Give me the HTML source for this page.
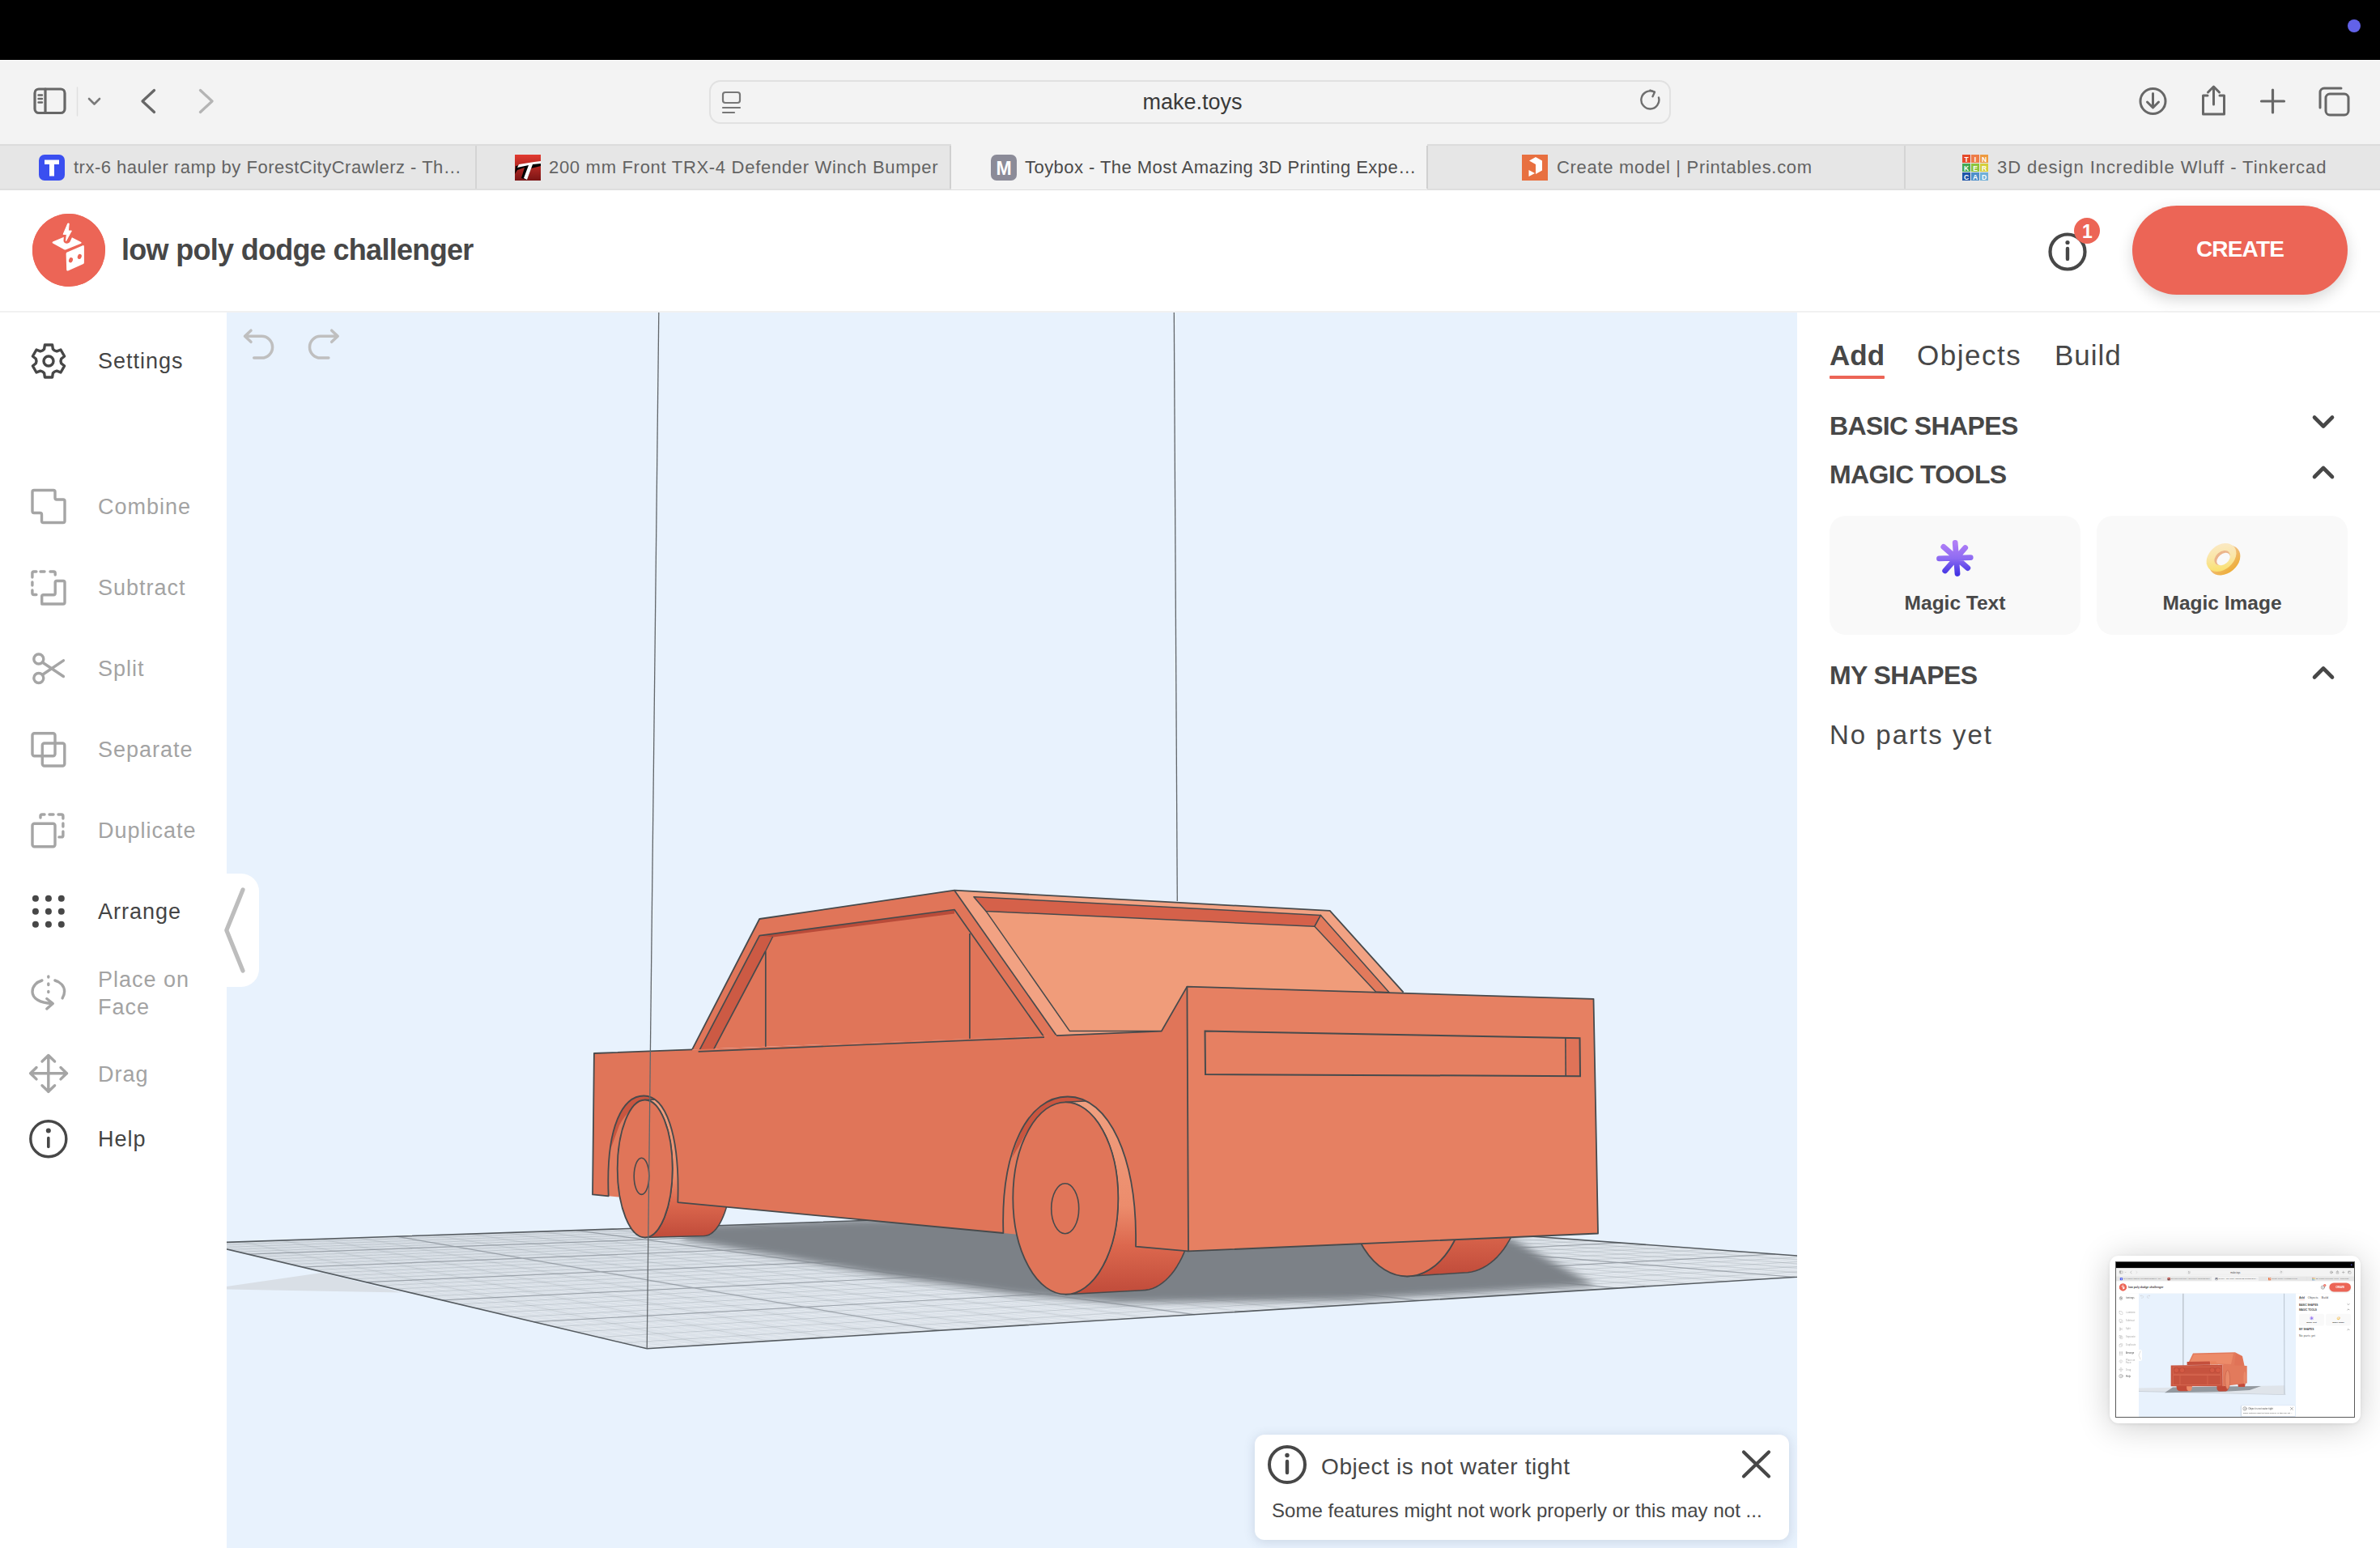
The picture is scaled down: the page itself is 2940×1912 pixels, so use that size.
<!DOCTYPE html>
<html><head><meta charset="utf-8">
<style>
*{box-sizing:border-box;margin:0;padding:0}
html,body{width:2940px;height:1912px;overflow:hidden;background:#fff;font-family:"Liberation Sans",sans-serif;position:relative}
.a{position:absolute}
#blk{left:0;top:0;width:2940px;height:74px;background:#000}
#dot{left:2900px;top:24px;width:16px;height:16px;border-radius:50%;background:#6262e8}
#tb{left:0;top:74px;width:2940px;height:104px;background:#f3f3f3;border-top:1px solid #fdfdfd}
#url{left:876px;top:99px;width:1188px;height:54px;border:2px solid #e1e1e1;border-radius:14px;background:#f3f3f3}
#urltxt{left:876px;top:99px;width:1194px;height:54px;line-height:54px;text-align:center;font-size:27px;color:#3a3a3a}
#tabs{left:0;top:178px;width:2940px;height:57px;background:#e6e6e6;border-top:2px solid #dcdcdc;border-bottom:2px solid #dedede}
.tab{top:178px;height:57px;line-height:57px;font-size:22px;letter-spacing:0.7px;color:#636363;white-space:nowrap}
.tsep{top:180px;width:2px;height:53px;background:#d4d4d4}
#acttab{left:1175px;top:178px;width:588px;height:56px;background:#f3f3f3}
.fav{top:191px;width:32px;height:32px;border-radius:7px}
#hdr{left:0;top:235px;width:2940px;height:151px;background:#fff;border-bottom:2px solid #f1f1f1}
#logo{left:40px;top:264px;width:90px;height:90px;border-radius:50%;background:#ec6556}
#title{left:150px;top:285px;font-size:36px;letter-spacing:-0.7px;font-weight:bold;color:#474747;white-space:nowrap;line-height:48px}
#create{left:2634px;top:254px;width:266px;height:110px;border-radius:55px;background:#ec6556;box-shadow:0 6px 18px rgba(0,0,0,0.16);color:#fff;font-weight:bold;font-size:28px;text-align:center;line-height:107px;letter-spacing:-0.8px}
#side{left:0;top:386px;width:280px;height:1526px;background:#fff}
.si{left:121px;font-size:27px;line-height:40px;letter-spacing:1px;white-space:nowrap;color:#a3a3a3}
.si.dk{color:#444}
#vp{left:280px;top:386px;width:1940px;height:1526px;background:#e8f2fd;overflow:hidden}
#rp{left:2220px;top:386px;width:720px;height:1526px;background:#fff}
.hd{left:2260px;font-size:32px;letter-spacing:-0.6px;font-weight:bold;color:#474747;white-space:nowrap}
.card{top:637px;width:310px;height:147px;border-radius:20px;background:#f9f9f9}
.cl{font-size:24.5px;font-weight:bold;color:#484848;text-align:center;width:310px}
#toast{left:1550px;top:1772px;width:660px;height:130px;border-radius:12px;background:#fff;box-shadow:0 2px 14px rgba(60,80,110,0.18)}
#thumb{left:2606px;top:1551px;width:310px;height:207px;border-radius:11px;background:#fff;box-shadow:0 4px 40px rgba(0,0,0,0.2),0 1px 4px rgba(0,0,0,0.08)}
</style></head><body>
<div class="a" id="blk"></div>
<div class="a" id="dot"></div>
<div class="a" id="tb"></div>
<div class="a" id="url"></div>

<svg class="a" style="left:0;top:0" width="2940" height="240" viewBox="0 0 2940 240">
 <g fill="none" stroke-linecap="round" stroke-linejoin="round">
  <rect x="43" y="110" width="37" height="29.5" rx="5" stroke="#676767" stroke-width="3.2"/>
  <line x1="56" y1="110" x2="56" y2="139.5" stroke="#676767" stroke-width="3.2"/>
  <path d="M47.5 117.5h4.5M47.5 122h4.5M47.5 126.5h4.5" stroke="#676767" stroke-width="2.4"/>
  <line x1="95.5" y1="108" x2="95.5" y2="143" stroke="#e0e0e0" stroke-width="1.5"/>
  <path d="M110 122l6.5 6.5 6.5-6.5" stroke="#7a7a7a" stroke-width="2.6"/>
  <path d="M190.5 111.5L176 125l14.5 13.5" stroke="#676767" stroke-width="3.3"/>
  <path d="M247.5 111.5L262 125l-14.5 13.5" stroke="#b4b4b4" stroke-width="3.3"/>
  <rect x="893" y="114" width="21" height="13" rx="3" stroke="#777" stroke-width="2.2"/>
  <path d="M893 133h21M893 139h14" stroke="#777" stroke-width="2.2"/>
  <path d="M2049 120.5a11 11 0 1 1-5.5-6.8" stroke="#6f6f6f" stroke-width="2.4"/>
  <path d="M2038.5 111.5l5.5 2.2-2.5 5.5" stroke="#6f6f6f" stroke-width="2.4"/>
  <circle cx="2659.5" cy="125" r="15.5" stroke="#676767" stroke-width="3"/>
  <path d="M2659.5 115.5v17M2652.5 126l7 7 7-7" stroke="#676767" stroke-width="3"/>
  <path d="M2727 118h-5.5v23h26v-23h-5.5" stroke="#676767" stroke-width="3"/>
  <path d="M2734.5 129v-22M2727.5 114l7-7 7 7" stroke="#676767" stroke-width="3"/>
  <path d="M2807.5 111v28M2793.5 125h28" stroke="#676767" stroke-width="3.2"/>
  <rect x="2873" y="116" width="28" height="26" rx="5" stroke="#676767" stroke-width="3"/>
  <path d="M2866 133v-19a5 5 0 0 1 5-5h21" stroke="#676767" stroke-width="3"/>
 </g>
</svg>
<div class="a" id="urltxt">make.toys</div>
<div class="a" id="tabs"></div>
<div class="a" id="acttab"></div>

<div class="a tsep" style="left:587px"></div>
<div class="a tsep" style="left:2352px"></div>
<div class="a tsep" style="left:1173px;background:#d0d0d0"></div>
<div class="a tsep" style="left:1762px;background:#d0d0d0"></div>
<div class="a tab" style="left:91px;letter-spacing:0.5px">trx-6 hauler ramp by ForestCityCrawlerz - Th…</div>
<div class="a tab" style="left:678px">200 mm Front TRX-4 Defender Winch Bumper</div>
<div class="a tab" style="left:1266px;color:#4a4a4a;letter-spacing:0.45px">Toybox - The Most Amazing 3D Printing Expe…</div>
<div class="a tab" style="left:1923px">Create model | Printables.com</div>
<div class="a tab" style="left:2467px;letter-spacing:0.95px">3D design Incredible Wluff - Tinkercad</div>
<svg class="a" style="left:0;top:178px" width="2940" height="57" viewBox="0 178 2940 57">
 <rect x="48" y="191" width="32" height="32" rx="7" fill="#3a4ff0"/>
 <path d="M55 197.5h18v5.5h-6v14.5h-6v-14.5h-6z" fill="#fff"/>
 <defs><linearGradient id="rg" x1="0" y1="0" x2="0" y2="1"><stop offset="0" stop-color="#e23a30"/><stop offset="1" stop-color="#7a1414"/></linearGradient></defs>
 <rect x="636" y="191" width="32" height="32" fill="url(#rg)"/>
 <path d="M636 215l3-5 9-3-4 13 7 2 5-14 12-3v-5l-11 2h-1l-19 3z" fill="#000"/>
 <path d="M641 203l19-3 8-1v3l-10 1-7 19-4-2 6-16-14 3z" fill="#fff"/>
 <rect x="1224" y="191" width="32" height="32" rx="7" fill="#8b8b98"/>
 <text x="1240" y="216" font-size="23" font-weight="bold" fill="#fff" text-anchor="middle" font-family="Liberation Sans">M</text>
 <rect x="1880" y="191" width="32" height="32" fill="#e87040"/>
 <path d="M1889 198.5l8-4.5 8 4.5v12l-8 4.5v-12l-8-4.5z M1888.5 210l7.5 4-7.5 4z" fill="#fff"/>
 <g font-family="Liberation Sans" font-weight="bold" font-size="8.5" fill="#fff" text-anchor="middle">
 <rect x="2424" y="191" width="10" height="10" fill="#e54a2a"/><rect x="2435" y="191" width="10" height="10" fill="#ee7c48"/><rect x="2446" y="191" width="10" height="10" fill="#ee9a40"/>
 <rect x="2424" y="202" width="10" height="10" fill="#44a852"/><rect x="2435" y="202" width="10" height="10" fill="#8cc43a"/><rect x="2446" y="202" width="10" height="10" fill="#d4cf3a"/>
 <rect x="2424" y="213" width="10" height="10" fill="#1f55a8"/><rect x="2435" y="213" width="10" height="10" fill="#4e8fca"/><rect x="2446" y="213" width="10" height="10" fill="#6fb0d8"/>
 <text x="2429" y="199.5">T</text><text x="2440" y="199.5">I</text><text x="2451" y="199.5">N</text>
 <text x="2429" y="210.5">K</text><text x="2440" y="210.5">E</text><text x="2451" y="210.5">R</text>
 <text x="2429" y="221.5">C</text><text x="2440" y="221.5">A</text><text x="2451" y="221.5">D</text>
 </g>
</svg>
<div class="a" id="hdr"></div>
<div class="a" id="logo"></div>

<svg class="a" style="left:0;top:235px" width="2940" height="150" viewBox="0 235 2940 150">
 <circle cx="85" cy="309" r="45" fill="#ec6556"/>
 <path d="M83.8 276L78.1 289.4h4.2l-0.7 8.2 6.8-12.5h-4l0.8-9z" fill="#fff" stroke="#fff" stroke-width="1" stroke-linejoin="round"/>
 <path d="M65.2 298.5L78.8 292.7l-0.3 4.6c0 3.5 6 5.5 8.4 0.5l2-4.5l11.2 5.8c0.8 0.5 0.8 1.3 0 1.7L81.6 308.2c-0.8 0.3-1.5 0.3-2.3 0L65.2 300.5c-0.8-0.5-0.8-1.5 0-2z" fill="#fff"/>
 <path d="M83.6 311.2L102.2 303.2c1-0.4 1.7 0.3 1.7 1.5v19.5c0 1-0.6 1.7-1.5 2.1L84 334.4c-1 0.4-1.7-0.2-1.8-1.2l-0.6-19.8c0-1 0.9-1.9 2-2.2z" fill="#fff"/>
 <ellipse cx="87.5" cy="321.2" rx="2.4" ry="3.2" transform="rotate(20 87.5 321.2)" fill="#ec6556"/>
 <ellipse cx="98.3" cy="316.9" rx="2.4" ry="3.2" transform="rotate(20 98.3 316.9)" fill="#ec6556"/>
 <g fill="none" stroke="#474747" stroke-linecap="round">
  <circle cx="2554" cy="311" r="21.5" stroke-width="4.2"/>
  <line x1="2554" y1="307" x2="2554" y2="320" stroke-width="4.4"/>
 </g>
 <circle cx="2554" cy="299.5" r="2.6" fill="#474747"/>
 <circle cx="2578" cy="285" r="16" fill="#ec6556"/>
 <text x="2578.5" y="294" font-size="23" font-weight="bold" fill="#fff" text-anchor="middle" font-family="Liberation Sans">1</text>
</svg>
<div class="a" id="title">low poly dodge challenger</div>
<div class="a" id="create">CREATE</div>
<div class="a" id="side"></div>
<div class="a" id="vp"></div>
<svg class="a" style="left:280px;top:386px" width="1940" height="1526" viewBox="280 386 1940 1526">
<defs>
<clipPath id="plc"><polygon points="248.5,1535.4 799.2,1665.8 2414.6,1565.2 1447.7,1494.6"/></clipPath>
<filter id="blr" x="-10%" y="-30%" width="120%" height="160%"><feGaussianBlur stdDeviation="5"/></filter>
<linearGradient id="trd" x1="0" y1="0" x2="0" y2="1"><stop offset="0" stop-color="#de6a4f"/><stop offset="1" stop-color="#bf4a39"/></linearGradient>
<linearGradient id="trl" x1="0" y1="0" x2="0" y2="1"><stop offset="0" stop-color="#f0a080"/><stop offset="0.55" stop-color="#ec8c6c"/><stop offset="0.75" stop-color="#dc684e"/><stop offset="1" stop-color="#c04b3a"/></linearGradient>
</defs>
<polygon points="280,1588.9 397.2,1571.9 496.8,1596.4 280,1592.6" fill="#d9dfe6"/>
<polygon points="248.5,1535.4 799.2,1665.8 2414.6,1565.2 1447.7,1494.6" fill="#e1e7ee"/>
<path d="M261.1 1535.0L818.5 1664.6M273.6 1534.5L837.7 1663.4M286.0 1534.1L856.8 1662.2M298.4 1533.7L875.7 1661.0M310.7 1533.3L894.4 1659.9M323.0 1532.9L913.1 1658.7M335.3 1532.4L931.6 1657.6M347.4 1532.0L950.0 1656.4M359.6 1531.6L968.2 1655.3M371.7 1531.2L986.3 1654.1M383.7 1530.8L1004.3 1653.0M395.7 1530.4L1022.1 1651.9M407.6 1530.0L1039.9 1650.8M419.5 1529.6L1057.5 1649.7M431.3 1529.2L1075.0 1648.6M443.1 1528.8L1092.3 1647.5M454.8 1528.4L1109.6 1646.5M466.5 1528.0L1126.7 1645.4M478.1 1527.6L1143.7 1644.3M489.7 1527.2L1160.6 1643.3M501.3 1526.8L1177.4 1642.2M512.7 1526.4L1194.0 1641.2M524.2 1526.0L1210.6 1640.2M535.6 1525.6L1227.0 1639.2M546.9 1525.2L1243.3 1638.1M558.2 1524.9L1259.6 1637.1M569.5 1524.5L1275.7 1636.1M580.7 1524.1L1291.7 1635.1M591.9 1523.7L1307.6 1634.1M603.0 1523.3L1323.4 1633.2M614.1 1523.0L1339.0 1632.2M625.1 1522.6L1354.6 1631.2M636.1 1522.2L1370.1 1630.2M647.0 1521.8L1385.5 1629.3M657.9 1521.5L1400.8 1628.3M668.8 1521.1L1415.9 1627.4M679.6 1520.7L1431.0 1626.5M690.4 1520.4L1446.0 1625.5M701.1 1520.0L1460.9 1624.6M711.8 1519.6L1475.7 1623.7M722.4 1519.3L1490.4 1622.8M733.0 1518.9L1505.0 1621.8M743.6 1518.6L1519.5 1620.9M754.1 1518.2L1533.9 1620.0M764.6 1517.8L1548.2 1619.2M775.0 1517.5L1562.5 1618.3M785.4 1517.1L1576.6 1617.4M795.7 1516.8L1590.7 1616.5M806.0 1516.4L1604.7 1615.6M816.3 1516.1L1618.6 1614.8M826.5 1515.7L1632.4 1613.9M836.7 1515.4L1646.1 1613.1M846.9 1515.0L1659.7 1612.2M857.0 1514.7L1673.2 1611.4M867.1 1514.4L1686.7 1610.5M877.1 1514.0L1700.1 1609.7M887.1 1513.7L1713.4 1608.9M897.0 1513.3L1726.6 1608.0M907.0 1513.0L1739.8 1607.2M916.8 1512.7L1752.8 1606.4M926.7 1512.3L1765.8 1605.6M936.5 1512.0L1778.7 1604.8M946.3 1511.7L1791.5 1604.0M956.0 1511.3L1804.3 1603.2M965.7 1511.0L1817.0 1602.4M975.3 1510.7L1829.6 1601.6M985.0 1510.3L1842.1 1600.9M994.6 1510.0L1854.5 1600.1M1004.1 1509.7L1866.9 1599.3M1013.6 1509.4L1879.2 1598.5M1023.1 1509.0L1891.5 1597.8M1032.5 1508.7L1903.6 1597.0M1041.9 1508.4L1915.7 1596.3M1051.3 1508.1L1927.8 1595.5M1060.7 1507.8L1939.7 1594.8M1070.0 1507.5L1951.6 1594.0M1079.2 1507.1L1963.4 1593.3M1088.5 1506.8L1975.2 1592.6M1097.7 1506.5L1986.9 1591.8M1106.8 1506.2L1998.5 1591.1M1116.0 1505.9L2010.0 1590.4M1125.1 1505.6L2021.5 1589.7M1134.1 1505.3L2032.9 1589.0M1143.2 1505.0L2044.3 1588.3M1152.2 1504.7L2055.6 1587.6M1161.1 1504.4L2066.8 1586.9M1170.1 1504.0L2078.0 1586.2M1179.0 1503.7L2089.1 1585.5M1187.8 1503.4L2100.1 1584.8M1196.7 1503.1L2111.1 1584.1M1205.5 1502.8L2122.0 1583.4M1214.2 1502.5L2132.9 1582.7M1223.0 1502.2L2143.7 1582.1M1231.7 1501.9L2154.5 1581.4M1240.4 1501.7L2165.1 1580.7M1249.0 1501.4L2175.8 1580.1M1257.6 1501.1L2186.3 1579.4M1266.2 1500.8L2196.9 1578.8M1274.8 1500.5L2207.3 1578.1M1283.3 1500.2L2217.7 1577.5M1291.8 1499.9L2228.1 1576.8M1300.3 1499.6L2238.4 1576.2M1308.7 1499.3L2248.6 1575.5M1317.1 1499.0L2258.8 1574.9M1325.5 1498.8L2268.9 1574.3M1333.8 1498.5L2279.0 1573.6M1342.2 1498.2L2289.0 1573.0M1350.4 1497.9L2299.0 1572.4M1358.7 1497.6L2308.9 1571.8M1366.9 1497.3L2318.7 1571.2M1375.1 1497.1L2328.5 1570.6M1383.3 1496.8L2338.3 1570.0M1391.5 1496.5L2348.0 1569.3M1399.6 1496.2L2357.7 1568.7M1407.7 1496.0L2367.3 1568.1M1415.7 1495.7L2376.8 1567.6M1423.8 1495.4L2386.4 1567.0M1431.8 1495.1L2395.8 1566.4M1439.7 1494.9L2405.2 1565.8" stroke="#f5f8fb" stroke-width="0.9" fill="none" opacity="0.65"/>
<path d="M251.2 1536.0L1453.1 1495.0M253.9 1536.7L1458.6 1495.4M256.7 1537.3L1464.1 1495.8M259.4 1538.0L1469.6 1496.2M262.2 1538.6L1475.2 1496.6M265.0 1539.3L1480.7 1497.0M267.8 1540.0L1486.4 1497.4M270.7 1540.7L1492.0 1497.8M273.5 1541.3L1497.7 1498.2M276.4 1542.0L1503.4 1498.7M279.3 1542.7L1509.1 1499.1M282.2 1543.4L1514.9 1499.5M285.2 1544.1L1520.7 1499.9M288.1 1544.8L1526.5 1500.4M291.1 1545.5L1532.4 1500.8M294.1 1546.2L1538.3 1501.2M297.2 1546.9L1544.3 1501.7M300.2 1547.6L1550.2 1502.1M303.3 1548.4L1556.2 1502.5M306.4 1549.1L1562.3 1503.0M309.5 1549.8L1568.4 1503.4M312.7 1550.6L1574.5 1503.9M315.8 1551.3L1580.6 1504.3M319.0 1552.1L1586.8 1504.8M322.2 1552.9L1593.0 1505.2M325.5 1553.6L1599.3 1505.7M328.7 1554.4L1605.6 1506.1M332.0 1555.2L1611.9 1506.6M335.3 1556.0L1618.3 1507.1M338.7 1556.7L1624.7 1507.5M342.0 1557.5L1631.1 1508.0M345.4 1558.3L1637.6 1508.5M348.8 1559.2L1644.2 1508.9M352.3 1560.0L1650.7 1509.4M355.7 1560.8L1657.3 1509.9M359.2 1561.6L1664.0 1510.4M362.8 1562.5L1670.6 1510.9M366.3 1563.3L1677.4 1511.4M369.9 1564.1L1684.1 1511.9M373.5 1565.0L1690.9 1512.4M377.1 1565.9L1697.8 1512.9M380.8 1566.7L1704.7 1513.4M384.5 1567.6L1711.6 1513.9M388.2 1568.5L1718.6 1514.4M392.0 1569.4L1725.6 1514.9M395.8 1570.3L1732.7 1515.4M399.6 1571.2L1739.8 1515.9M403.5 1572.1L1746.9 1516.4M407.3 1573.0L1754.1 1517.0M411.3 1573.9L1761.4 1517.5M415.2 1574.9L1768.6 1518.0M419.2 1575.8L1776.0 1518.6M423.2 1576.8L1783.4 1519.1M427.2 1577.7L1790.8 1519.7M431.3 1578.7L1798.3 1520.2M435.4 1579.7L1805.8 1520.7M439.6 1580.6L1813.4 1521.3M443.8 1581.6L1821.0 1521.9M448.0 1582.6L1828.7 1522.4M452.3 1583.6L1836.4 1523.0M456.6 1584.7L1844.2 1523.5M460.9 1585.7L1852.0 1524.1M465.3 1586.7L1859.9 1524.7M469.7 1587.8L1867.8 1525.3M474.1 1588.8L1875.8 1525.9M478.6 1589.9L1883.8 1526.4M483.2 1591.0L1891.9 1527.0M487.7 1592.0L1900.0 1527.6M492.3 1593.1L1908.2 1528.2M497.0 1594.2L1916.5 1528.8M501.7 1595.4L1924.8 1529.4M506.4 1596.5L1933.2 1530.0M511.2 1597.6L1941.6 1530.7M516.0 1598.8L1950.1 1531.3M520.9 1599.9L1958.6 1531.9M525.8 1601.1L1967.2 1532.5M530.8 1602.2L1975.8 1533.2M535.8 1603.4L1984.6 1533.8M540.9 1604.6L1993.3 1534.4M546.0 1605.8L2002.2 1535.1M551.1 1607.1L2011.1 1535.7M556.3 1608.3L2020.0 1536.4M561.6 1609.5L2029.1 1537.0M566.9 1610.8L2038.2 1537.7M572.2 1612.1L2047.3 1538.4M577.6 1613.3L2056.5 1539.1M583.1 1614.6L2065.8 1539.7M588.6 1615.9L2075.2 1540.4M594.2 1617.3L2084.6 1541.1M599.8 1618.6L2094.1 1541.8M605.5 1619.9L2103.6 1542.5M611.2 1621.3L2113.3 1543.2M617.0 1622.7L2123.0 1543.9M622.9 1624.1L2132.7 1544.6M628.8 1625.5L2142.6 1545.3M634.8 1626.9L2152.5 1546.1M640.8 1628.3L2162.5 1546.8M646.9 1629.7L2172.5 1547.5M653.1 1631.2L2182.7 1548.3M659.3 1632.7L2192.9 1549.0M665.6 1634.2L2203.2 1549.8M672.0 1635.7L2213.6 1550.5M678.4 1637.2L2224.0 1551.3M684.9 1638.7L2234.5 1552.1M691.5 1640.3L2245.1 1552.8M698.1 1641.9L2255.8 1553.6M704.8 1643.4L2266.6 1554.4M711.6 1645.1L2277.5 1555.2M718.5 1646.7L2288.4 1556.0M725.4 1648.3L2299.4 1556.8M732.4 1650.0L2310.5 1557.6M739.5 1651.7L2321.7 1558.4M746.7 1653.4L2333.0 1559.2M753.9 1655.1L2344.4 1560.1M761.2 1656.8L2355.9 1560.9M768.7 1658.6L2367.4 1561.8M776.2 1660.3L2379.1 1562.6M783.8 1662.1L2390.8 1563.5M791.4 1664.0L2402.7 1564.3" stroke="#c3ccd6" stroke-width="0.8" fill="none" opacity="0.45"/>
<path d="M259.4 1538.0L1469.6 1496.2M298.4 1533.7L875.7 1661.0M270.7 1540.7L1492.0 1497.8M347.4 1532.0L950.0 1656.4M282.2 1543.4L1514.9 1499.5M395.7 1530.4L1022.1 1651.9M294.1 1546.2L1538.3 1501.2M443.1 1528.8L1092.3 1647.5M306.4 1549.1L1562.3 1503.0M489.7 1527.2L1160.6 1643.3M319.0 1552.1L1586.8 1504.8M535.6 1525.6L1227.0 1639.2M332.0 1555.2L1611.9 1506.6M580.7 1524.1L1291.7 1635.1M345.4 1558.3L1637.6 1508.5M625.1 1522.6L1354.6 1631.2M359.2 1561.6L1664.0 1510.4M668.8 1521.1L1415.9 1627.4M373.5 1565.0L1690.9 1512.4M711.8 1519.6L1475.7 1623.7M388.2 1568.5L1718.6 1514.4M754.1 1518.2L1533.9 1620.0M403.5 1572.1L1746.9 1516.4M795.7 1516.8L1590.7 1616.5M419.2 1575.8L1776.0 1518.6M836.7 1515.4L1646.1 1613.1M435.4 1579.7L1805.8 1520.7M877.1 1514.0L1700.1 1609.7M452.3 1583.6L1836.4 1523.0M916.8 1512.7L1752.8 1606.4M469.7 1587.8L1867.8 1525.3M956.0 1511.3L1804.3 1603.2M487.7 1592.0L1900.0 1527.6M994.6 1510.0L1854.5 1600.1M506.4 1596.5L1933.2 1530.0M1032.5 1508.7L1903.6 1597.0M525.8 1601.1L1967.2 1532.5M1070.0 1507.5L1951.6 1594.0M546.0 1605.8L2002.2 1535.1M1106.8 1506.2L1998.5 1591.1M566.9 1610.8L2038.2 1537.7M1143.2 1505.0L2044.3 1588.3M588.6 1615.9L2075.2 1540.4M1179.0 1503.7L2089.1 1585.5M611.2 1621.3L2113.3 1543.2M1214.2 1502.5L2132.9 1582.7M634.8 1626.9L2152.5 1546.1M1249.0 1501.4L2175.8 1580.1M659.3 1632.7L2192.9 1549.0M1283.3 1500.2L2217.7 1577.5M684.9 1638.7L2234.5 1552.1M1317.1 1499.0L2258.8 1574.9M711.6 1645.1L2277.5 1555.2M1350.4 1497.9L2299.0 1572.4M739.5 1651.7L2321.7 1558.4M1383.3 1496.8L2338.3 1570.0M768.7 1658.6L2367.4 1561.8M1415.7 1495.7L2376.8 1567.6" stroke="#8e979f" stroke-width="1" fill="none" opacity="0.3"/>
<path d="M306.4 1549.1L1562.3 1503.0M489.7 1527.2L1160.6 1643.3M373.5 1565.0L1690.9 1512.4M711.8 1519.6L1475.7 1623.7M452.3 1583.6L1836.4 1523.0M916.8 1512.7L1752.8 1606.4M546.0 1605.8L2002.2 1535.1M1106.8 1506.2L1998.5 1591.1M659.3 1632.7L2192.9 1549.0M1283.3 1500.2L2217.7 1577.5" stroke="#6a727a" stroke-width="1.2" fill="none" opacity="0.45"/>
<g clip-path="url(#plc)"><polygon points="860.0,1513.0 1447.7,1494.6 1864.0,1529.0 1972.0,1588.0 1664.7,1606.0 1382.0,1609.0 1258.0,1599.0 1095.0,1576.0 840.8,1530.0" fill="#7b8187" filter="url(#blr)"/></g>
<polyline points="1447.7,1494.6 248.5,1535.4 799.2,1665.8 2414.6,1565.2" fill="none" stroke="#555b60" stroke-width="1.6"/>
<polyline points="1447.7,1494.6 2414.6,1565.2" fill="none" stroke="#555b60" stroke-width="1.6"/>
<line x1="1450.3" y1="386" x2="1454.3" y2="1113" stroke="#62676b" stroke-width="1.3"/>
<polygon points="855,1296.3 938.2,1135 1179,1099.7 1305,1279.1" fill="#e07559"/>
<polygon points="1179,1099.7 1642.8,1124.9 1770,1266 1434.8,1273.6 1305,1279.1" fill="#f2a283"/>
<polygon points="1218,1125.4 1623.9,1144.3 1699.5,1225 1740,1270 1434.8,1273.6 1321.4,1273.6" fill="#f09c7a"/>
<polygon points="1202.9,1107.7 1631.5,1130.4 1623.9,1144.3 1218,1125.4" fill="#d5614a" stroke="#474a4c" stroke-width="1.5" stroke-linejoin="round"/>
<polygon points="1631.5,1130.4 1716,1225.7 1699.5,1225 1623.9,1144.3" fill="#e27a5c" stroke="#474a4c" stroke-width="1.5" stroke-linejoin="round"/>
<polyline points="1218,1125.4 1321.4,1273.6 1434.8,1273.6" fill="none" stroke="#474a4c" stroke-width="1.5"/>
<polygon points="938.2,1155.6 954.6,1156.9 881.5,1296.3 863.9,1297.3" fill="#cc5a44"/>
<polygon points="938.2,1155.6 1179,1123.5 1179,1128.5 954.6,1157.5" fill="#b94b39"/>
<polyline points="863.9,1297.3 938.2,1155.6 1179,1123.5 1290,1281.2" fill="none" stroke="#474a4c" stroke-width="1.7" stroke-linejoin="round"/>
<polyline points="954.6,1157 945.8,1174.5" fill="none" stroke="#474a4c" stroke-width="1.4"/>
<path d="M945.8 1174.5V1294M1197.9 1153V1284M881.5 1296.3L945.8 1174.5" fill="none" stroke="#474a4c" stroke-width="1.7"/>
<polyline points="855,1296.3 938.2,1135 1179,1099.7 1642.8,1124.9 1733.6,1225.7" fill="none" stroke="#474a4c" stroke-width="1.8" stroke-linejoin="round"/>
<polyline points="1179,1099.7 1305,1279.1" fill="none" stroke="#474a4c" stroke-width="1.7"/>
<path d="M751.7 1477.3C748 1390 770 1353.5 795.3 1353.5C822 1353.5 840 1400 837.3 1485.1Z" fill="#e27b5e"/>
<path d="M754 1420C760 1375 775 1353.5 795.3 1353.5C805 1353.5 812 1356 818 1362C800 1356 780 1362 765 1390Z" fill="#c9553f"/>
<path d="M1239.4 1523C1236 1420 1270 1354.5 1318.8 1354.5C1370 1354.5 1405 1430 1403 1539.6Z" fill="#e27b5e"/>
<path d="M1250 1430C1262 1385 1285 1354.5 1318.8 1354.5C1332 1354.5 1342 1357 1352 1362C1320 1356 1280 1370 1262 1410Z" fill="#c9553f"/>
<polygon points="1738.0,1342.5 1742.9,1342.8 1747.8,1343.5 1752.6,1344.7 1757.4,1346.5 1762.1,1348.7 1766.7,1351.4 1771.2,1354.6 1775.5,1358.2 1779.7,1362.2 1783.7,1366.7 1787.5,1371.5 1791.0,1376.8 1794.4,1382.4 1797.5,1388.3 1800.4,1394.5 1803.0,1401.0 1805.3,1407.8 1807.3,1414.7 1809.0,1421.9 1810.4,1429.2 1811.6,1436.7 1812.4,1444.2 1812.8,1451.8 1813.0,1459.5 1812.8,1467.2 1812.4,1474.8 1811.6,1482.3 1810.4,1489.8 1809.0,1497.1 1807.3,1504.3 1805.3,1511.2 1803.0,1518.0 1800.4,1524.5 1797.5,1530.7 1794.4,1536.6 1791.0,1542.2 1787.5,1547.5 1783.7,1552.3 1779.7,1556.8 1775.5,1560.8 1771.2,1564.4 1766.7,1567.6 1762.1,1570.3 1757.4,1572.5 1752.6,1574.3 1747.8,1575.5 1742.9,1576.2 1738.0,1576.5 1808.0,1572.0 1812.9,1571.7 1817.8,1571.0 1822.6,1569.8 1827.4,1568.0 1832.1,1565.8 1836.7,1563.1 1841.2,1559.9 1845.5,1556.3 1849.7,1552.3 1853.7,1547.8 1857.5,1543.0 1861.0,1537.7 1864.4,1532.1 1867.5,1526.2 1870.4,1520.0 1873.0,1513.5 1875.3,1506.7 1877.3,1499.8 1879.0,1492.6 1880.4,1485.3 1881.6,1477.8 1882.4,1470.3 1882.8,1462.7 1883.0,1455.0 1882.8,1447.3 1882.4,1439.7 1881.6,1432.2 1880.4,1424.7 1879.0,1417.4 1877.3,1410.2 1875.3,1403.3 1873.0,1396.5 1870.4,1390.0 1867.5,1383.8 1864.4,1377.9 1861.0,1372.3 1857.5,1367.0 1853.7,1362.2 1849.7,1357.7 1845.5,1353.7 1841.2,1350.1 1836.7,1346.9 1832.1,1344.2 1827.4,1342.0 1822.6,1340.2 1817.8,1339.0 1812.9,1338.3 1808.0,1338.0" fill="url(#trl)" stroke="#474a4c" stroke-width="1.6" stroke-linejoin="round"/>
<ellipse cx="1738.0" cy="1459.5" rx="75.0" ry="117.0" fill="#e07559" stroke="#474a4c" stroke-width="1.8"/>
<polygon points="796.7,1358.5 798.9,1358.7 801.1,1359.2 803.3,1360.1 805.5,1361.4 807.6,1363.0 809.7,1365.0 811.7,1367.3 813.7,1369.9 815.6,1372.8 817.4,1376.1 819.1,1379.6 820.7,1383.4 822.3,1387.5 823.7,1391.8 825.0,1396.3 826.1,1401.0 827.2,1405.9 828.1,1411.0 828.9,1416.2 829.5,1421.5 830.0,1426.9 830.4,1432.4 830.6,1437.9 830.7,1443.5 830.6,1449.1 830.4,1454.6 830.0,1460.1 829.5,1465.5 828.9,1470.8 828.1,1476.0 827.2,1481.1 826.1,1486.0 825.0,1490.7 823.7,1495.2 822.3,1499.5 820.7,1503.6 819.1,1507.4 817.4,1510.9 815.6,1514.2 813.7,1517.1 811.7,1519.7 809.7,1522.0 807.6,1524.0 805.5,1525.6 803.3,1526.9 801.1,1527.8 798.9,1528.3 796.7,1528.5 869.7,1526.5 871.9,1526.3 874.1,1525.8 876.3,1524.9 878.5,1523.6 880.6,1522.0 882.7,1520.0 884.7,1517.7 886.7,1515.1 888.6,1512.2 890.4,1508.9 892.1,1505.4 893.7,1501.6 895.3,1497.5 896.7,1493.2 898.0,1488.7 899.1,1484.0 900.2,1479.1 901.1,1474.0 901.9,1468.8 902.5,1463.5 903.0,1458.1 903.4,1452.6 903.6,1447.1 903.7,1441.5 903.6,1435.9 903.4,1430.4 903.0,1424.9 902.5,1419.5 901.9,1414.2 901.1,1409.0 900.2,1403.9 899.1,1399.0 898.0,1394.3 896.7,1389.8 895.3,1385.5 893.7,1381.4 892.1,1377.6 890.4,1374.1 888.6,1370.8 886.7,1367.9 884.7,1365.3 882.7,1363.0 880.6,1361.0 878.5,1359.4 876.3,1358.1 874.1,1357.2 871.9,1356.7 869.7,1356.5" fill="url(#trl)" stroke="#474a4c" stroke-width="1.6" stroke-linejoin="round"/>
<ellipse cx="796.7" cy="1443.5" rx="34.0" ry="85.0" fill="#e07559" stroke="#474a4c" stroke-width="1.8"/>
<ellipse cx="792.5" cy="1452.8" rx="9.3" ry="22.6" fill="none" stroke="#474a4c" stroke-width="1.6"/>
<polygon points="1316.3,1361.3 1320.6,1361.6 1324.8,1362.3 1329.0,1363.6 1333.1,1365.3 1337.2,1367.6 1341.2,1370.3 1345.0,1373.5 1348.8,1377.2 1352.4,1381.3 1355.9,1385.8 1359.2,1390.8 1362.3,1396.1 1365.2,1401.7 1367.9,1407.7 1370.3,1414.1 1372.6,1420.7 1374.6,1427.5 1376.4,1434.6 1377.9,1441.8 1379.1,1449.3 1380.1,1456.8 1380.7,1464.5 1381.2,1472.2 1381.3,1480.0 1381.2,1487.8 1380.7,1495.5 1380.1,1503.2 1379.1,1510.7 1377.9,1518.2 1376.4,1525.4 1374.6,1532.5 1372.6,1539.3 1370.3,1545.9 1367.9,1552.3 1365.2,1558.3 1362.3,1563.9 1359.2,1569.2 1355.9,1574.2 1352.4,1578.7 1348.8,1582.8 1345.0,1586.5 1341.2,1589.7 1337.2,1592.4 1333.1,1594.7 1329.0,1596.4 1324.8,1597.7 1320.6,1598.4 1316.3,1598.7 1411.0,1593.7 1415.3,1593.4 1419.5,1592.7 1423.7,1591.4 1427.8,1589.7 1431.9,1587.4 1435.9,1584.7 1439.7,1581.5 1443.5,1577.8 1447.1,1573.7 1450.6,1569.2 1453.9,1564.2 1457.0,1558.9 1459.9,1553.3 1462.6,1547.3 1465.0,1540.9 1467.3,1534.3 1469.3,1527.5 1471.1,1520.4 1472.6,1513.2 1473.8,1505.7 1474.8,1498.2 1475.4,1490.5 1475.9,1482.8 1476.0,1475.0 1475.9,1467.2 1475.4,1459.5 1474.8,1451.8 1473.8,1444.3 1472.6,1436.8 1471.1,1429.6 1469.3,1422.5 1467.3,1415.7 1465.0,1409.1 1462.6,1402.7 1459.9,1396.7 1457.0,1391.1 1453.9,1385.8 1450.6,1380.8 1447.1,1376.3 1443.5,1372.2 1439.7,1368.5 1435.9,1365.3 1431.9,1362.6 1427.8,1360.3 1423.7,1358.6 1419.5,1357.3 1415.3,1356.6 1411.0,1356.3" fill="url(#trl)" stroke="#474a4c" stroke-width="1.6" stroke-linejoin="round"/>
<ellipse cx="1316.3" cy="1480.0" rx="65.0" ry="118.7" fill="#e07559" stroke="#474a4c" stroke-width="1.8"/>
<ellipse cx="1315.7" cy="1492.7" rx="17.0" ry="31.0" fill="none" stroke="#474a4c" stroke-width="1.6"/>
<path d="M733.9 1301L1434.8 1273.6L1466.4 1218.6L1468 1545.4L1403 1539.6C1405 1430 1370 1354.5 1318.8 1354.5C1270 1354.5 1236 1420 1239.4 1523L837.3 1485.1C840 1400 822 1353.5 795.3 1353.5C770 1353.5 748 1390 751.7 1477.3L732 1475.4Z" fill="#e07559"/>
<path d="M855 1296.3L733.9 1301L732 1475.4L751.7 1477.3C748 1390 770 1353.5 795.3 1353.5C822 1353.5 840 1400 837.3 1485.1L1239.4 1523C1236 1420 1270 1354.5 1318.8 1354.5C1370 1354.5 1405 1430 1403 1539.6L1468 1545.4M1305 1279.1L1434.8 1273.6L1466.4 1218.6" fill="none" stroke="#474a4c" stroke-width="1.8" stroke-linejoin="round"/>
<polygon points="1466.4,1218.6 1968.5,1233.8 1974,1523.5 1468,1545.4" fill="#e68062" stroke="#474a4c" stroke-width="1.8" stroke-linejoin="round"/>
<polygon points="1933.8,1281.9 1951.5,1282.2 1952,1329.2 1934,1329" fill="#e07358"/>
<polygon points="1488.5,1273.6 1951.5,1282.2 1952,1329.2 1489,1327" fill="none" stroke="#474a4c" stroke-width="2"/>
<line x1="1933.8" y1="1282" x2="1934.2" y2="1329" stroke="#474a4c" stroke-width="1.6"/>
<polyline points="862.6,1298.8 1290,1281.2" fill="none" stroke="#474a4c" stroke-width="1.7"/>
<line x1="813.8" y1="386" x2="799.2" y2="1666" stroke="#62676b" stroke-width="1.3"/>
</svg>
<div class="a" id="rp"></div>
<svg class="a" style="left:0;top:386px" width="440" height="1100" viewBox="0 386 440 1100">
 <g fill="none" stroke-linecap="round" stroke-linejoin="round">
  <path d="M54.6 431.2 L55.4 426.0 L64.6 426.0 L65.4 431.2 L67.5 433.0 L70.2 433.9 L75.0 432.0 L79.6 440.0 L75.6 443.3 L75.0 446.0 L75.6 448.7 L79.6 452.0 L75.0 460.0 L70.2 458.1 L67.5 459.0 L65.4 460.8 L64.6 466.0 L55.4 466.0 L54.6 460.8 L52.5 459.0 L49.8 458.1 L45.0 460.0 L40.4 452.0 L44.4 448.7 L45.0 446.0 L44.4 443.3 L40.4 440.0 L45.0 432.0 L49.8 433.9 L52.5 433.0Z" stroke="#474747" stroke-width="3.4"/>
  <circle cx="60" cy="446" r="6" stroke="#474747" stroke-width="3.4"/>
  <g stroke="#a5a5a5" stroke-width="3.4">
   <path d="M42 605.5h24a2 2 0 0 1 2 2v7.5a2 2 0 0 0 2 2h8a2 2 0 0 1 2 2v24.5a2 2 0 0 1-2 2h-24.5a2 2 0 0 1-2-2v-8a2 2 0 0 0-2-2h-7.5a2 2 0 0 1-2-2v-24a2 2 0 0 1 2-2z"/>
   <path d="M51.7 746h26.3a2 2 0 0 0 2-2v-24.5a2 2 0 0 0-2-2h-7.8a2 2 0 0 0-2 2v13.3a2 2 0 0 1-2 2h-12.5a2 2 0 0 0-2 2v7.2a2 2 0 0 0 2 2z"/>
   <path d="M39.9 713v-5a2 2 0 0 1 2-2h3M50 706h5M62 706h4.2a2 2 0 0 1 2 2v2M39.9 719v4M39.9 729v3.5a2 2 0 0 0 2 2h3"/>
   <circle cx="47.8" cy="814" r="6"/>
   <circle cx="47.8" cy="837.5" r="6"/>
   <path d="M53 818.5L78.4 835.5M53 833L78.4 815.8"/>
   <rect x="40" y="905.7" width="28" height="28" rx="2.5"/>
   <rect x="52.3" y="918" width="27.5" height="28" rx="2.5"/>
   <rect x="40" y="1017.3" width="28" height="28.5" rx="2.5"/>
   <path d="M50 1010v-2a2 2 0 0 1 2-2h3M61 1006h5M72 1006h3.9a2 2 0 0 1 2 2v3M77.9 1017v4M77.9 1027v4.9a2 2 0 0 1-2 2h-3"/>
   <path d="M59.8 1206v1M59.8 1215v1.5M59.8 1224.5v1"/>
   <path d="M51.9 1211C45 1213 40 1218 40 1225c0 8 9 14 24.5 14.5M67.9 1211c7 2 11.7 7 11.7 13.5 0 3-1 6-2.5 8.4M57.8 1233.5l7.5 6-7.5 6.5"/>
   <path d="M59.8 1303.5v45M37.6 1325.7h45M52 1311l7.8-7.5 7.8 7.5M52 1340.8l7.8 7.5 7.8-7.5M45 1318.5l-7.4 7.2 7.4 7.2M75 1318.5l7.4 7.2-7.4 7.2"/>
  </g>
  <circle cx="59.8" cy="1406.7" r="22" stroke="#474747" stroke-width="3.4"/>
  <path d="M59.8 1405.5v11" stroke="#474747" stroke-width="3.6"/>
  <g stroke="#bfbfbf" stroke-width="3.5">
   <path d="M310 408.2l-7.5 7.1 7.5 7M302.5 415.3h20.7a13.4 13.4 0 0 1 0 26.8h-9.5"/>
   <path d="M409.7 408.2l7.5 7.1-7.5 7M417.2 415.3h-21.3a13.4 13.4 0 0 0 0 26.8h10"/>
  </g>
 </g>
 <circle cx="59.8" cy="1396.6" r="3" fill="#474747"/>
 <g fill="#474747">
  <circle cx="43.9" cy="1109.8" r="4"/><circle cx="59.9" cy="1109.8" r="4"/><circle cx="75.8" cy="1109.8" r="4"/>
  <circle cx="43.9" cy="1125.8" r="4"/><circle cx="59.9" cy="1125.8" r="4"/><circle cx="75.8" cy="1125.8" r="4"/>
  <circle cx="43.9" cy="1141.7" r="4"/><circle cx="59.9" cy="1141.7" r="4"/><circle cx="75.8" cy="1141.7" r="4"/>
 </g>
</svg>
<div class="a si dk" style="top:426px">Settings</div>
<div class="a si" style="top:606px">Combine</div>
<div class="a si" style="top:706px">Subtract</div>
<div class="a si" style="top:806px">Split</div>
<div class="a si" style="top:906px">Separate</div>
<div class="a si" style="top:1006px">Duplicate</div>
<div class="a si dk" style="top:1106px">Arrange</div>
<div class="a si" style="top:1194px;line-height:33.5px">Place on<br>Face</div>
<div class="a si" style="top:1307px">Drag</div>
<div class="a si dk" style="top:1387px">Help</div>


<div class="a" style="left:2260px;top:414px;font-size:35px;font-weight:bold;color:#474747;line-height:50px">Add</div>
<div class="a" style="left:2260px;top:464px;width:68px;height:4px;background:#ec6556;border-radius:1px"></div>
<div class="a" style="left:2368px;top:414px;font-size:35px;letter-spacing:1.5px;color:#474747;line-height:50px">Objects</div>
<div class="a" style="left:2538px;top:414px;font-size:35px;letter-spacing:1px;color:#474747;line-height:50px">Build</div>
<div class="a hd" style="top:506px;line-height:40px">BASIC SHAPES</div>
<div class="a hd" style="top:566px;line-height:40px">MAGIC TOOLS</div>
<div class="a hd" style="top:814px;line-height:40px">MY SHAPES</div>
<svg class="a" style="left:2840px;top:500px" width="60" height="360" viewBox="2840 500 60 360">
 <g fill="none" stroke="#474747" stroke-width="4.6" stroke-linecap="round" stroke-linejoin="round">
  <path d="M2859 515.5l11 11 11-11"/>
  <path d="M2859 589l11-11 11 11"/>
  <path d="M2859 836.5l11-11 11 11"/>
 </g>
</svg>
<div class="a card" style="left:2260px"></div>
<div class="a card" style="left:2590px"></div>
<svg class="a" style="left:2380px;top:655px" width="70" height="70" viewBox="2380 655 70 70">
 <defs><linearGradient id="pg" x1="0" y1="0" x2="0" y2="1"><stop offset="0" stop-color="#b07ef6"/><stop offset="0.5" stop-color="#8f6cf2"/><stop offset="1" stop-color="#4636e4"/></linearGradient></defs>
 <g stroke="url(#pg)" stroke-width="6.8" stroke-linecap="round">
  <path d="M2415.2 670.5L2418 708.5M2395.5 689.8L2434.2 688.7M2400.8 675.4L2430.8 701.6M2427.7 676.6L2402.7 705"/>
 </g>
</svg>
<svg class="a" style="left:2715px;top:660px" width="60" height="60" viewBox="2715 660 60 60">
 <defs>
  <linearGradient id="og1" x1="0" y1="0" x2="0" y2="1"><stop offset="0" stop-color="#f2c7a8"/><stop offset="1" stop-color="#eeae38"/></linearGradient>
  <linearGradient id="og2" x1="1" y1="0" x2="0" y2="1"><stop offset="0" stop-color="#fbead0"/><stop offset="0.5" stop-color="#fae6a6"/><stop offset="1" stop-color="#f9de55"/></linearGradient>
 </defs>
 <ellipse cx="2748" cy="692" rx="21.5" ry="16" transform="rotate(-40 2748 692)" fill="url(#og1)"/>
 <ellipse cx="2744" cy="688.5" rx="20.5" ry="15" transform="rotate(-40 2744 688.5)" fill="url(#og2)"/>
 <ellipse cx="2745" cy="689" rx="11" ry="7.5" transform="rotate(-40 2745 689)" fill="#ebb58c"/>
 <ellipse cx="2746.5" cy="690.5" rx="9.5" ry="6.2" transform="rotate(-40 2746.5 690.5)" fill="#f9f9f9"/>
</svg>
<div class="a cl" style="left:2260px;top:728px;line-height:34px">Magic Text</div>
<div class="a cl" style="left:2590px;top:728px;line-height:34px">Magic Image</div>
<div class="a" style="left:2260px;top:886px;font-size:33px;letter-spacing:2px;color:#474747;line-height:44px;white-space:nowrap">No parts yet</div>
<div class="a" id="toast"></div>

<svg class="a" style="left:1550px;top:1772px" width="660" height="130" viewBox="1550 1772 660 130">
 <g fill="none" stroke="#474747" stroke-linecap="round">
  <circle cx="1590" cy="1809" r="22" stroke-width="4"/>
  <path d="M1590 1805v14" stroke-width="4.4"/>
  <path d="M2154 1793.5l31 30M2185 1793.5l-31 30" stroke-width="4.2"/>
 </g>
 <circle cx="1590" cy="1797.5" r="2.7" fill="#474747"/>
</svg>
<div class="a" style="left:1632px;top:1792px;font-size:28px;line-height:40px;color:#474747;white-space:nowrap;letter-spacing:0.6px">Object is not water tight</div>
<div class="a" style="left:1571px;top:1850px;font-size:24px;line-height:32px;color:#474747;white-space:nowrap;letter-spacing:0.05px">Some features might not work properly or this may not ...</div>
<div class="a" style="left:280px;top:1079px;width:40px;height:140px;background:#fff;border-radius:0 22px 22px 0"></div>
<svg class="a" style="left:270px;top:1090px" width="40" height="120" viewBox="270 1090 40 120">
 <path d="M300 1099L279.8 1149 300 1199" fill="none" stroke="#bdbdbd" stroke-width="5.2" stroke-linecap="round" stroke-linejoin="round"/>
</svg>


<div class="a" id="thumb"></div>
<div class="a" style="left:2614px;top:1559px;width:294px;height:191px;overflow:hidden;background:#fff"><div style="position:absolute;left:0;top:0;width:2940px;height:1912px;transform:scale(0.1);transform-origin:0 0">
<div class="a" id="blk"></div>
<div class="a" id="dot"></div>
<div class="a" id="tb"></div>
<div class="a" id="url"></div>

<svg class="a" style="left:0;top:0" width="2940" height="240" viewBox="0 0 2940 240">
 <g fill="none" stroke-linecap="round" stroke-linejoin="round">
  <rect x="43" y="110" width="37" height="29.5" rx="5" stroke="#676767" stroke-width="3.2"/>
  <line x1="56" y1="110" x2="56" y2="139.5" stroke="#676767" stroke-width="3.2"/>
  <path d="M47.5 117.5h4.5M47.5 122h4.5M47.5 126.5h4.5" stroke="#676767" stroke-width="2.4"/>
  <line x1="95.5" y1="108" x2="95.5" y2="143" stroke="#e0e0e0" stroke-width="1.5"/>
  <path d="M110 122l6.5 6.5 6.5-6.5" stroke="#7a7a7a" stroke-width="2.6"/>
  <path d="M190.5 111.5L176 125l14.5 13.5" stroke="#676767" stroke-width="3.3"/>
  <path d="M247.5 111.5L262 125l-14.5 13.5" stroke="#b4b4b4" stroke-width="3.3"/>
  <rect x="893" y="114" width="21" height="13" rx="3" stroke="#777" stroke-width="2.2"/>
  <path d="M893 133h21M893 139h14" stroke="#777" stroke-width="2.2"/>
  <path d="M2049 120.5a11 11 0 1 1-5.5-6.8" stroke="#6f6f6f" stroke-width="2.4"/>
  <path d="M2038.5 111.5l5.5 2.2-2.5 5.5" stroke="#6f6f6f" stroke-width="2.4"/>
  <circle cx="2659.5" cy="125" r="15.5" stroke="#676767" stroke-width="3"/>
  <path d="M2659.5 115.5v17M2652.5 126l7 7 7-7" stroke="#676767" stroke-width="3"/>
  <path d="M2727 118h-5.5v23h26v-23h-5.5" stroke="#676767" stroke-width="3"/>
  <path d="M2734.5 129v-22M2727.5 114l7-7 7 7" stroke="#676767" stroke-width="3"/>
  <path d="M2807.5 111v28M2793.5 125h28" stroke="#676767" stroke-width="3.2"/>
  <rect x="2873" y="116" width="28" height="26" rx="5" stroke="#676767" stroke-width="3"/>
  <path d="M2866 133v-19a5 5 0 0 1 5-5h21" stroke="#676767" stroke-width="3"/>
 </g>
</svg>
<div class="a" id="urltxt">make.toys</div>
<div class="a" id="tabs"></div>
<div class="a" id="acttab"></div>

<div class="a tsep" style="left:587px"></div>
<div class="a tsep" style="left:2352px"></div>
<div class="a tsep" style="left:1173px;background:#d0d0d0"></div>
<div class="a tsep" style="left:1762px;background:#d0d0d0"></div>
<div class="a tab" style="left:91px;letter-spacing:0.5px">trx-6 hauler ramp by ForestCityCrawlerz - Th…</div>
<div class="a tab" style="left:678px">200 mm Front TRX-4 Defender Winch Bumper</div>
<div class="a tab" style="left:1266px;color:#4a4a4a;letter-spacing:0.45px">Toybox - The Most Amazing 3D Printing Expe…</div>
<div class="a tab" style="left:1923px">Create model | Printables.com</div>
<div class="a tab" style="left:2467px;letter-spacing:0.95px">3D design Incredible Wluff - Tinkercad</div>
<svg class="a" style="left:0;top:178px" width="2940" height="57" viewBox="0 178 2940 57">
 <rect x="48" y="191" width="32" height="32" rx="7" fill="#3a4ff0"/>
 <path d="M55 197.5h18v5.5h-6v14.5h-6v-14.5h-6z" fill="#fff"/>
 <defs><linearGradient id="rg" x1="0" y1="0" x2="0" y2="1"><stop offset="0" stop-color="#e23a30"/><stop offset="1" stop-color="#7a1414"/></linearGradient></defs>
 <rect x="636" y="191" width="32" height="32" fill="url(#rg)"/>
 <path d="M636 215l3-5 9-3-4 13 7 2 5-14 12-3v-5l-11 2h-1l-19 3z" fill="#000"/>
 <path d="M641 203l19-3 8-1v3l-10 1-7 19-4-2 6-16-14 3z" fill="#fff"/>
 <rect x="1224" y="191" width="32" height="32" rx="7" fill="#8b8b98"/>
 <text x="1240" y="216" font-size="23" font-weight="bold" fill="#fff" text-anchor="middle" font-family="Liberation Sans">M</text>
 <rect x="1880" y="191" width="32" height="32" fill="#e87040"/>
 <path d="M1889 198.5l8-4.5 8 4.5v12l-8 4.5v-12l-8-4.5z M1888.5 210l7.5 4-7.5 4z" fill="#fff"/>
 <g font-family="Liberation Sans" font-weight="bold" font-size="8.5" fill="#fff" text-anchor="middle">
 <rect x="2424" y="191" width="10" height="10" fill="#e54a2a"/><rect x="2435" y="191" width="10" height="10" fill="#ee7c48"/><rect x="2446" y="191" width="10" height="10" fill="#ee9a40"/>
 <rect x="2424" y="202" width="10" height="10" fill="#44a852"/><rect x="2435" y="202" width="10" height="10" fill="#8cc43a"/><rect x="2446" y="202" width="10" height="10" fill="#d4cf3a"/>
 <rect x="2424" y="213" width="10" height="10" fill="#1f55a8"/><rect x="2435" y="213" width="10" height="10" fill="#4e8fca"/><rect x="2446" y="213" width="10" height="10" fill="#6fb0d8"/>
 <text x="2429" y="199.5">T</text><text x="2440" y="199.5">I</text><text x="2451" y="199.5">N</text>
 <text x="2429" y="210.5">K</text><text x="2440" y="210.5">E</text><text x="2451" y="210.5">R</text>
 <text x="2429" y="221.5">C</text><text x="2440" y="221.5">A</text><text x="2451" y="221.5">D</text>
 </g>
</svg>
<div class="a" id="hdr"></div>
<div class="a" id="logo"></div>

<svg class="a" style="left:0;top:235px" width="2940" height="150" viewBox="0 235 2940 150">
 <circle cx="85" cy="309" r="45" fill="#ec6556"/>
 <path d="M83.8 276L78.1 289.4h4.2l-0.7 8.2 6.8-12.5h-4l0.8-9z" fill="#fff" stroke="#fff" stroke-width="1" stroke-linejoin="round"/>
 <path d="M65.2 298.5L78.8 292.7l-0.3 4.6c0 3.5 6 5.5 8.4 0.5l2-4.5l11.2 5.8c0.8 0.5 0.8 1.3 0 1.7L81.6 308.2c-0.8 0.3-1.5 0.3-2.3 0L65.2 300.5c-0.8-0.5-0.8-1.5 0-2z" fill="#fff"/>
 <path d="M83.6 311.2L102.2 303.2c1-0.4 1.7 0.3 1.7 1.5v19.5c0 1-0.6 1.7-1.5 2.1L84 334.4c-1 0.4-1.7-0.2-1.8-1.2l-0.6-19.8c0-1 0.9-1.9 2-2.2z" fill="#fff"/>
 <ellipse cx="87.5" cy="321.2" rx="2.4" ry="3.2" transform="rotate(20 87.5 321.2)" fill="#ec6556"/>
 <ellipse cx="98.3" cy="316.9" rx="2.4" ry="3.2" transform="rotate(20 98.3 316.9)" fill="#ec6556"/>
 <g fill="none" stroke="#474747" stroke-linecap="round">
  <circle cx="2554" cy="311" r="21.5" stroke-width="4.2"/>
  <line x1="2554" y1="307" x2="2554" y2="320" stroke-width="4.4"/>
 </g>
 <circle cx="2554" cy="299.5" r="2.6" fill="#474747"/>
 <circle cx="2578" cy="285" r="16" fill="#ec6556"/>
 <text x="2578.5" y="294" font-size="23" font-weight="bold" fill="#fff" text-anchor="middle" font-family="Liberation Sans">1</text>
</svg>
<div class="a" id="title">low poly dodge challenger</div>
<div class="a" id="create">CREATE</div>
<div class="a" id="side"></div>
<div class="a" id="vp"></div>
<svg class="a" style="left:280px;top:386px" width="1940" height="1526" viewBox="280 386 1940 1526">
<polygon points="280,1556 2080,1522 2093,1636 280,1596" fill="#dfe4ea"/>
<polygon points="280,1590 2093,1632 2093,1640 280,1600" fill="#c9d0d8"/>
<polygon points="700,1545 1300,1535 1790,1530 1650,1580 1300,1600 600,1612" fill="#868c92" opacity="0.85"/>
<line x1="829" y1="386" x2="829" y2="1540" stroke="#9aa0a6" stroke-width="8"/>
<line x1="2076" y1="386" x2="2080" y2="1630" stroke="#b9c4cf" stroke-width="10"/>
<polygon points="950,1125 1470,1113 1560,1160 1590,1300 1314,1267 897,1234" fill="#e27a5c"/>
<polygon points="960,1140 1450,1128 1420,1260 910,1240" fill="#ec8b69"/>
<polygon points="1480,1130 1555,1165 1580,1290 1460,1275" fill="#e07357"/>
<polygon points="876,1229 1157,1225 1165,1267 876,1270" fill="#c44f3c"/>
<polygon points="1165,1225 1230,1225 1260,1265 1165,1267" fill="#e9835f"/>
<path d="M745 1530h150l10 40c-5 20-20 22-40 22h-70c-25 0-40-10-45-30z" fill="#c24b39"/>
<path d="M870 1530h70l-5 35c-5 22-15 27-30 27s-28-8-32-30z" fill="#ee8a68"/>
<path d="M1245 1530h150l-10 40c-8 22-25 25-45 25h-60c-20 0-30-15-35-30z" fill="#bf4a38"/>
<polygon points="1500,1490 1600,1485 1590,1540 1510,1540" fill="#c24b39"/>
<polygon points="677,1275 1314,1267 1318,1532 677,1532" fill="#c6533f"/>
<polygon points="1314,1267 1617,1280 1617,1494 1318,1532" fill="#e27a5c"/>
<ellipse cx="1377" cy="1452" rx="30" ry="118" fill="#e98a6a" stroke="#c0604a" stroke-width="6"/>
<ellipse cx="1590" cy="1430" rx="16" ry="80" fill="#e98a6a"/>
<g fill="#d35a44" stroke="#b44735" stroke-width="6">
<circle cx="745" cy="1334" r="32"/><circle cx="816" cy="1334" r="32"/><circle cx="1188" cy="1334" r="32"/><circle cx="1259" cy="1334" r="32"/>
</g>
<g fill="none" stroke="#d86a52" stroke-width="8">
<rect x="702" y="1292" width="590" height="90"/>
<rect x="702" y="1396" width="590" height="120"/>
<path d="M790 1396v120M1130 1396v120"/>
</g>
</svg>

<div class="a" id="rp"></div>
<svg class="a" style="left:0;top:386px" width="440" height="1100" viewBox="0 386 440 1100">
 <g fill="none" stroke-linecap="round" stroke-linejoin="round">
  <path d="M54.6 431.2 L55.4 426.0 L64.6 426.0 L65.4 431.2 L67.5 433.0 L70.2 433.9 L75.0 432.0 L79.6 440.0 L75.6 443.3 L75.0 446.0 L75.6 448.7 L79.6 452.0 L75.0 460.0 L70.2 458.1 L67.5 459.0 L65.4 460.8 L64.6 466.0 L55.4 466.0 L54.6 460.8 L52.5 459.0 L49.8 458.1 L45.0 460.0 L40.4 452.0 L44.4 448.7 L45.0 446.0 L44.4 443.3 L40.4 440.0 L45.0 432.0 L49.8 433.9 L52.5 433.0Z" stroke="#474747" stroke-width="3.4"/>
  <circle cx="60" cy="446" r="6" stroke="#474747" stroke-width="3.4"/>
  <g stroke="#a5a5a5" stroke-width="3.4">
   <path d="M42 605.5h24a2 2 0 0 1 2 2v7.5a2 2 0 0 0 2 2h8a2 2 0 0 1 2 2v24.5a2 2 0 0 1-2 2h-24.5a2 2 0 0 1-2-2v-8a2 2 0 0 0-2-2h-7.5a2 2 0 0 1-2-2v-24a2 2 0 0 1 2-2z"/>
   <path d="M51.7 746h26.3a2 2 0 0 0 2-2v-24.5a2 2 0 0 0-2-2h-7.8a2 2 0 0 0-2 2v13.3a2 2 0 0 1-2 2h-12.5a2 2 0 0 0-2 2v7.2a2 2 0 0 0 2 2z"/>
   <path d="M39.9 713v-5a2 2 0 0 1 2-2h3M50 706h5M62 706h4.2a2 2 0 0 1 2 2v2M39.9 719v4M39.9 729v3.5a2 2 0 0 0 2 2h3"/>
   <circle cx="47.8" cy="814" r="6"/>
   <circle cx="47.8" cy="837.5" r="6"/>
   <path d="M53 818.5L78.4 835.5M53 833L78.4 815.8"/>
   <rect x="40" y="905.7" width="28" height="28" rx="2.5"/>
   <rect x="52.3" y="918" width="27.5" height="28" rx="2.5"/>
   <rect x="40" y="1017.3" width="28" height="28.5" rx="2.5"/>
   <path d="M50 1010v-2a2 2 0 0 1 2-2h3M61 1006h5M72 1006h3.9a2 2 0 0 1 2 2v3M77.9 1017v4M77.9 1027v4.9a2 2 0 0 1-2 2h-3"/>
   <path d="M59.8 1206v1M59.8 1215v1.5M59.8 1224.5v1"/>
   <path d="M51.9 1211C45 1213 40 1218 40 1225c0 8 9 14 24.5 14.5M67.9 1211c7 2 11.7 7 11.7 13.5 0 3-1 6-2.5 8.4M57.8 1233.5l7.5 6-7.5 6.5"/>
   <path d="M59.8 1303.5v45M37.6 1325.7h45M52 1311l7.8-7.5 7.8 7.5M52 1340.8l7.8 7.5 7.8-7.5M45 1318.5l-7.4 7.2 7.4 7.2M75 1318.5l7.4 7.2-7.4 7.2"/>
  </g>
  <circle cx="59.8" cy="1406.7" r="22" stroke="#474747" stroke-width="3.4"/>
  <path d="M59.8 1405.5v11" stroke="#474747" stroke-width="3.6"/>
  <g stroke="#bfbfbf" stroke-width="3.5">
   <path d="M310 408.2l-7.5 7.1 7.5 7M302.5 415.3h20.7a13.4 13.4 0 0 1 0 26.8h-9.5"/>
   <path d="M409.7 408.2l7.5 7.1-7.5 7M417.2 415.3h-21.3a13.4 13.4 0 0 0 0 26.8h10"/>
  </g>
 </g>
 <circle cx="59.8" cy="1396.6" r="3" fill="#474747"/>
 <g fill="#474747">
  <circle cx="43.9" cy="1109.8" r="4"/><circle cx="59.9" cy="1109.8" r="4"/><circle cx="75.8" cy="1109.8" r="4"/>
  <circle cx="43.9" cy="1125.8" r="4"/><circle cx="59.9" cy="1125.8" r="4"/><circle cx="75.8" cy="1125.8" r="4"/>
  <circle cx="43.9" cy="1141.7" r="4"/><circle cx="59.9" cy="1141.7" r="4"/><circle cx="75.8" cy="1141.7" r="4"/>
 </g>
</svg>
<div class="a si dk" style="top:426px">Settings</div>
<div class="a si" style="top:606px">Combine</div>
<div class="a si" style="top:706px">Subtract</div>
<div class="a si" style="top:806px">Split</div>
<div class="a si" style="top:906px">Separate</div>
<div class="a si" style="top:1006px">Duplicate</div>
<div class="a si dk" style="top:1106px">Arrange</div>
<div class="a si" style="top:1194px;line-height:33.5px">Place on<br>Face</div>
<div class="a si" style="top:1307px">Drag</div>
<div class="a si dk" style="top:1387px">Help</div>


<div class="a" style="left:2260px;top:414px;font-size:35px;font-weight:bold;color:#474747;line-height:50px">Add</div>
<div class="a" style="left:2260px;top:464px;width:68px;height:4px;background:#ec6556;border-radius:1px"></div>
<div class="a" style="left:2368px;top:414px;font-size:35px;letter-spacing:1.5px;color:#474747;line-height:50px">Objects</div>
<div class="a" style="left:2538px;top:414px;font-size:35px;letter-spacing:1px;color:#474747;line-height:50px">Build</div>
<div class="a hd" style="top:506px;line-height:40px">BASIC SHAPES</div>
<div class="a hd" style="top:566px;line-height:40px">MAGIC TOOLS</div>
<div class="a hd" style="top:814px;line-height:40px">MY SHAPES</div>
<svg class="a" style="left:2840px;top:500px" width="60" height="360" viewBox="2840 500 60 360">
 <g fill="none" stroke="#474747" stroke-width="4.6" stroke-linecap="round" stroke-linejoin="round">
  <path d="M2859 515.5l11 11 11-11"/>
  <path d="M2859 589l11-11 11 11"/>
  <path d="M2859 836.5l11-11 11 11"/>
 </g>
</svg>
<div class="a card" style="left:2260px"></div>
<div class="a card" style="left:2590px"></div>
<svg class="a" style="left:2380px;top:655px" width="70" height="70" viewBox="2380 655 70 70">
 <defs><linearGradient id="pg" x1="0" y1="0" x2="0" y2="1"><stop offset="0" stop-color="#b07ef6"/><stop offset="0.5" stop-color="#8f6cf2"/><stop offset="1" stop-color="#4636e4"/></linearGradient></defs>
 <g stroke="url(#pg)" stroke-width="6.8" stroke-linecap="round">
  <path d="M2415.2 670.5L2418 708.5M2395.5 689.8L2434.2 688.7M2400.8 675.4L2430.8 701.6M2427.7 676.6L2402.7 705"/>
 </g>
</svg>
<svg class="a" style="left:2715px;top:660px" width="60" height="60" viewBox="2715 660 60 60">
 <defs>
  <linearGradient id="og1" x1="0" y1="0" x2="0" y2="1"><stop offset="0" stop-color="#f2c7a8"/><stop offset="1" stop-color="#eeae38"/></linearGradient>
  <linearGradient id="og2" x1="1" y1="0" x2="0" y2="1"><stop offset="0" stop-color="#fbead0"/><stop offset="0.5" stop-color="#fae6a6"/><stop offset="1" stop-color="#f9de55"/></linearGradient>
 </defs>
 <ellipse cx="2748" cy="692" rx="21.5" ry="16" transform="rotate(-40 2748 692)" fill="url(#og1)"/>
 <ellipse cx="2744" cy="688.5" rx="20.5" ry="15" transform="rotate(-40 2744 688.5)" fill="url(#og2)"/>
 <ellipse cx="2745" cy="689" rx="11" ry="7.5" transform="rotate(-40 2745 689)" fill="#ebb58c"/>
 <ellipse cx="2746.5" cy="690.5" rx="9.5" ry="6.2" transform="rotate(-40 2746.5 690.5)" fill="#f9f9f9"/>
</svg>
<div class="a cl" style="left:2260px;top:728px;line-height:34px">Magic Text</div>
<div class="a cl" style="left:2590px;top:728px;line-height:34px">Magic Image</div>
<div class="a" style="left:2260px;top:886px;font-size:33px;letter-spacing:2px;color:#474747;line-height:44px;white-space:nowrap">No parts yet</div>
<div class="a" id="toast"></div>

<svg class="a" style="left:1550px;top:1772px" width="660" height="130" viewBox="1550 1772 660 130">
 <g fill="none" stroke="#474747" stroke-linecap="round">
  <circle cx="1590" cy="1809" r="22" stroke-width="4"/>
  <path d="M1590 1805v14" stroke-width="4.4"/>
  <path d="M2154 1793.5l31 30M2185 1793.5l-31 30" stroke-width="4.2"/>
 </g>
 <circle cx="1590" cy="1797.5" r="2.7" fill="#474747"/>
</svg>
<div class="a" style="left:1632px;top:1792px;font-size:28px;line-height:40px;color:#474747;white-space:nowrap;letter-spacing:0.6px">Object is not water tight</div>
<div class="a" style="left:1571px;top:1850px;font-size:24px;line-height:32px;color:#474747;white-space:nowrap;letter-spacing:0.05px">Some features might not work properly or this may not ...</div>
<div class="a" style="left:280px;top:1079px;width:40px;height:140px;background:#fff;border-radius:0 22px 22px 0"></div>
<svg class="a" style="left:270px;top:1090px" width="40" height="120" viewBox="270 1090 40 120">
 <path d="M300 1099L279.8 1149 300 1199" fill="none" stroke="#bdbdbd" stroke-width="5.2" stroke-linecap="round" stroke-linejoin="round"/>
</svg>


</div></div>
<div class="a" style="left:2613px;top:1558px;width:296px;height:193px;border:1.5px solid #5a5a5a"></div>
</body></html>
